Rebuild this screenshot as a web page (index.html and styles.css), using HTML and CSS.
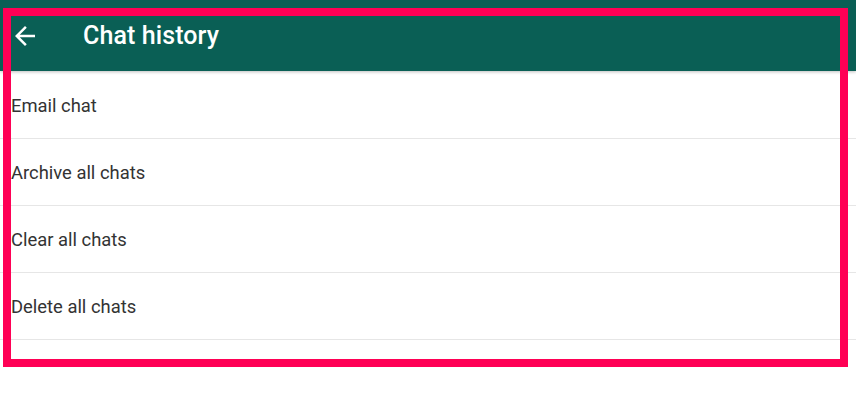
FILE: index.html
```html
<!DOCTYPE html>
<html lang="en">
<head>
    <meta charset="UTF-8">
    <meta name="viewport" content="width=device-width, initial-scale=1.0">
    <title>Chat history</title>
    <link rel="stylesheet" href="styles.css">
</head>
<body>
    <div class="screen">
        <header class="toolbar">
            <svg class="back" viewBox="0 0 24 24" width="30" height="30">
                <path d="M20 11H7.83l5.59-5.59L12 4l-8 8 8 8 1.41-1.41L7.83 13H20v-2z" fill="#fff"/>
            </svg>
            <h1>Chat history</h1>
        </header>
        <ul class="menu">
            <li>Email chat</li>
            <li>Archive all chats</li>
            <li>Clear all chats</li>
            <li>Delete all chats</li>
        </ul>
        <div class="highlight"></div>
    </div>
</body>
</html>
```

FILE: styles.css
```css
* {
    margin: 0;
    padding: 0;
    box-sizing: border-box;
}

body {
    background: #fff;
    font-family: Roboto, 'Liberation Sans', sans-serif;
}

.screen {
    position: relative;
    width: 856px;
    height: 400px;
    overflow: hidden;
}

.toolbar {
    height: 71px;
    background: #0a5f55;
    display: flex;
    align-items: center;
    padding-left: 10px;
    box-shadow: 0 1px 3px rgba(0, 0, 0, 0.25);
    position: relative;
    z-index: 1;
}

.back {
    display: block;
    margin-top: 1px;
}

.toolbar h1 {
    margin-left: 43px;
    color: #fff;
    font-size: 25px;
    font-weight: 500;
    letter-spacing: 0.1px;
}

.menu {
    list-style: none;
    padding-top: 1px;
}

.menu li {
    height: 67px;
    display: flex;
    align-items: center;
    padding-left: 11px;
    border-bottom: 1px solid #e6e6e6;
    font-size: 18.4px;
    color: #333;
}

.highlight {
    position: absolute;
    left: 3px;
    top: 8px;
    width: 845px;
    height: 359px;
    border: 8px solid #ff0055;
    z-index: 2;
}
```
